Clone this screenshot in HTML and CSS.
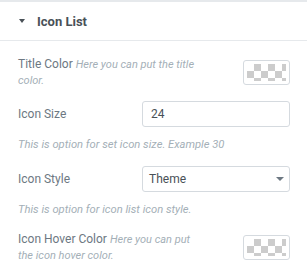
FILE: index.html
```html
<!DOCTYPE html>
<html lang="en">
<head>
    <meta charset="UTF-8">
    <meta name="viewport" content="width=device-width, initial-scale=1.0">
    <title>Icon List</title>
    <link rel="stylesheet" href="styles.css">
</head>
<body>
    <div class="panel">
        <div class="section-head">
            <span class="caret"></span>
            <h2>Icon List</h2>
        </div>

        <div class="controls">
            <div class="control">
                <div class="label wide">Title Color <em>Here you can put the title color.</em></div>
                <div class="swatch"><span></span></div>
            </div>

            <div class="control">
                <div class="label">Icon Size</div>
                <input class="field" type="text" value="24">
            </div>
            <p class="help">This is option for set icon size. Example 30</p>

            <div class="control">
                <div class="label">Icon Style</div>
                <div class="field select">Theme<span class="arrow"></span></div>
            </div>
            <p class="help">This is option for icon list icon style.</p>

            <div class="control">
                <div class="label wide">Icon Hover Color <em>Here you can put the icon hover color.</em></div>
                <div class="swatch"><span></span></div>
            </div>
        </div>
    </div>
</body>
</html>
```

FILE: styles.css
```css
/* General Reset */
body, html {
    margin: 0;
    padding: 0;
    background: #fff;
    font-family: 'Roboto', sans-serif;
}

.panel {
    border-top: 2px solid #e6e9ec;
    width: 307px;
}

/* Section header */
.section-head {
    display: flex;
    align-items: center;
    height: 38px;
    padding-left: 19px;
    border-bottom: 1px solid #e6e9ec;
}

.caret {
    width: 0;
    height: 0;
    border-left: 3.5px solid transparent;
    border-right: 3.5px solid transparent;
    border-top: 4px solid #495157;
    margin-right: 12px;
}

h2 {
    margin: 0;
    font-size: 13px;
    font-weight: bold;
    color: #495157;
}

/* Controls */
.controls {
    padding: 15px 17px 0 18px;
}

.control {
    display: flex;
    align-items: center;
    justify-content: space-between;
    margin-bottom: 13px;
}

.label {
    width: 124px;
    flex-shrink: 0;
    font-size: 12px;
    color: #6d7882;
    line-height: 16px;
}

.label.wide {
    width: 184px;
}

.label em {
    font-size: 11px;
    line-height: 12px;
    color: #a4afb7;
}

.swatch {
    width: 39px;
    height: 17px;
    padding: 3px;
    border: 1px solid #d5dadf;
    border-radius: 3px;
}

.swatch span {
    display: block;
    height: 100%;
    background-color: #fff;
    background-image:
        linear-gradient(45deg, #ccc 25%, transparent 25%, transparent 75%, #ccc 75%),
        linear-gradient(45deg, #ccc 25%, transparent 25%, transparent 75%, #ccc 75%);
    background-size: 14px 14px;
    background-position: 0 0, 7px 7px;
}

.field {
    flex: 1;
    width: 0;
    min-width: 0;
    box-sizing: border-box;
    height: 26px;
    margin: 0;
    border: 1px solid #d5dadf;
    border-radius: 3px;
    padding: 0 8px;
    font-family: 'Roboto', sans-serif;
    font-size: 12px;
    color: #495157;
    outline: none;
}

.select {
    display: flex;
    align-items: center;
    justify-content: space-between;
    padding: 0 5px 0 6px;
}

.arrow {
    width: 0;
    height: 0;
    border-left: 4px solid transparent;
    border-right: 4px solid transparent;
    border-top: 4px solid #6d7882;
}

.help {
    margin: -2px 0 14px;
    font-size: 11.2px;
    line-height: 14px;
    font-style: italic;
    color: #a4afb7;
}
```
